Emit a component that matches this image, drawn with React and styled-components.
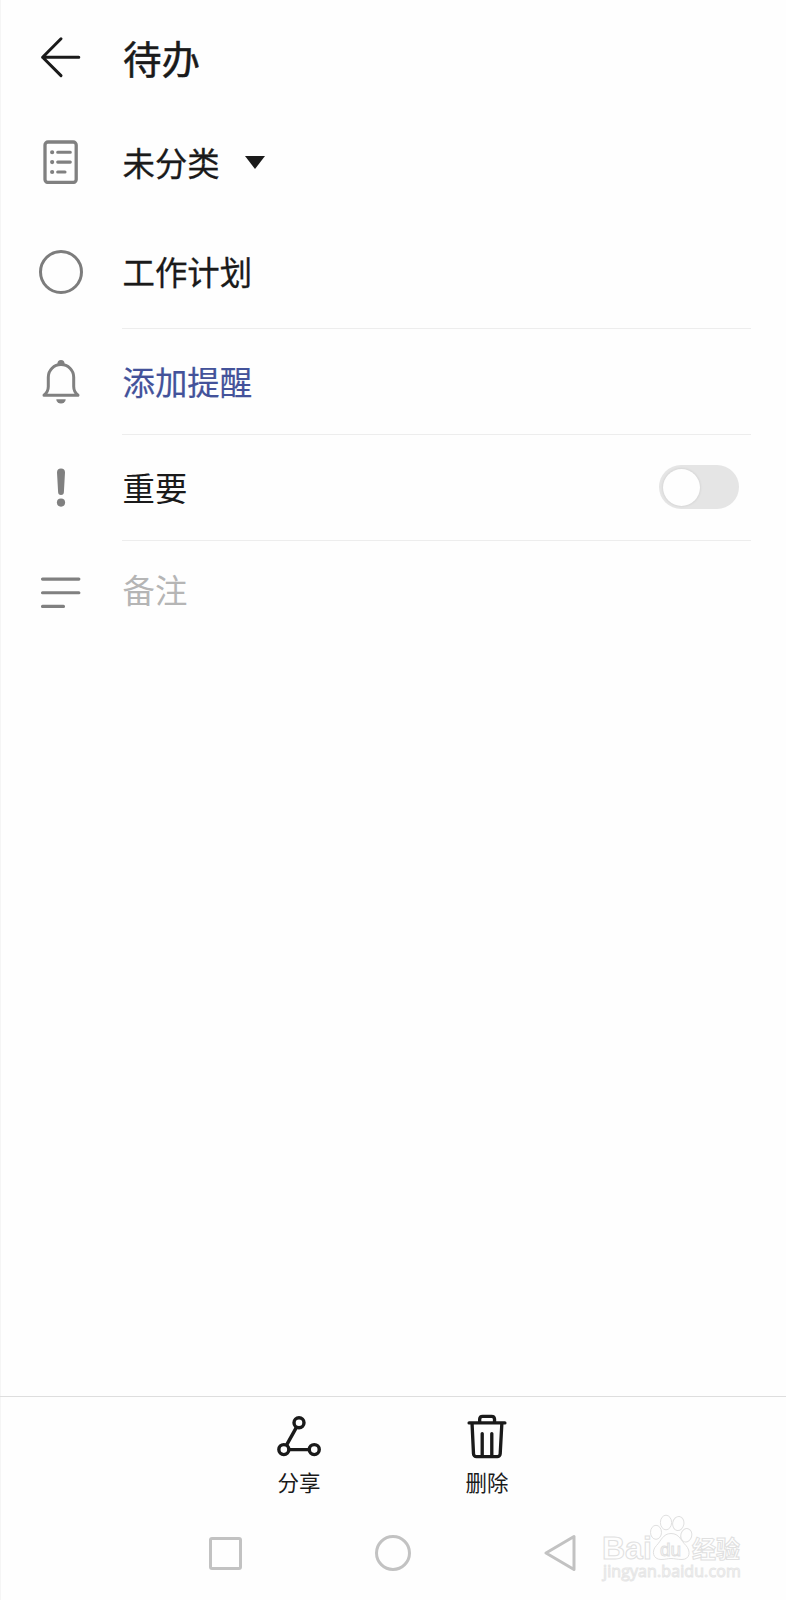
import React, { useState } from 'react'
import styled, { createGlobalStyle } from 'styled-components'

const ArrowIcon = () => (
	<svg width='44' height='44' viewBox='0 0 44 44' fill='none' stroke='#1a1a1a' strokeWidth='3' strokeLinecap='round' strokeLinejoin='round'>
		<path d='M22 3.8L3.6 22.2L22 40.6M3.6 22.2H39.8' />
	</svg>
)

const ListIcon = () => (
	<svg width='44' height='44' viewBox='0 0 44 44' fill='none' stroke='#808080' strokeLinecap='round'>
		<rect x='6' y='2' width='31.2' height='40.4' rx='3' strokeWidth='3.3' />
		<path d='M18.7 12.3H31.3M18.7 22.1H31.3M18.7 32H26' strokeWidth='3.1' />
		<path d='M13.1 12.3h.1M13.1 22.1h.1M13.1 32h.1' strokeWidth='4.1' />
	</svg>
)

const BellIcon = () => (
	<svg width='44' height='46' viewBox='0 0 44 46' fill='none' stroke='#808080' strokeLinejoin='round'>
		<path d='M5 36.2C8 33.8 9.3 31 9.3 27.5V18.2a12.7 12.7 0 0 1 25.4 0V27.5C34.7 31 36 33.8 39 36.2Z' strokeWidth='3' />
		<path d='M18.4 5a3.6 3.9 0 0 1 7.2 0Z' fill='#808080' stroke='none' />
		<path d='M17.3 40.2h9.4a4.7 4.4 0 0 1-9.4 0Z' fill='#808080' stroke='none' />
	</svg>
)

const ImportantIcon = () => (
	<svg width='44' height='40' viewBox='0 0 44 40' fill='#808080'>
		<path d='M18 4.5a4 4 0 0 1 8 0L24.9 24a2.9 2.9 0 0 1-5.8 0Z' />
		<circle cx='22' cy='34.6' r='4.1' />
	</svg>
)

const NoteIcon = () => (
	<svg width='44' height='36' viewBox='0 0 44 36' stroke='#808080' strokeWidth='3.1' strokeLinecap='round'>
		<path d='M3.5 4.1H39.9M3.5 17.8H39.9M3.5 31.4H24.5' />
	</svg>
)

const ShareIcon = () => (
	<svg width='46' height='46' viewBox='0 0 46 46' fill='none' stroke='#1a1a1a' strokeWidth='3.5'>
		<circle cx='23' cy='8.9' r='5.1' />
		<circle cx='7.5' cy='36.4' r='5.1' />
		<circle cx='38.6' cy='36.4' r='5.1' />
		<path d='M20.5 13.4L10.1 32M12.8 36.4H33.5' />
	</svg>
)

const TrashIcon = () => (
	<svg width='46' height='46' viewBox='0 0 46 46' fill='none' stroke='#1a1a1a' strokeWidth='3.4' strokeLinecap='round' strokeLinejoin='round'>
		<path d='M4.7 9.1H41.3M7.7 9.300L9.2 40.600a3 3 0 0 0 3 2.900H33.500a3 3 0 0 0 3-2.900L38.2 9.300' />
		<path d='M15.500 8.500V5.200a3 3 0 0 1 3-2.800H27.700a3 3 0 0 1 3 2.800V8.500' />
		<path d='M18.100 20V42.500M27.900 20V42.500' />
	</svg>
)

const BackIcon = () => (
	<svg width='34' height='40' viewBox='0 0 34 40' fill='none' stroke='#c2c2c2' strokeWidth='3' strokeLinejoin='round'>
		<path d='M30 3.5V36.500L2 20Z' />
	</svg>
)

const Watermark = () => (
	<WatermarkSvg width='146' height='76' viewBox='0 0 146 76' fill='#fefefe' stroke='#e0e0e0' strokeWidth='1'>
		<text x='2' y='49' fontSize='32' fontWeight='bold'>Bai</text>
		<ellipse cx='56' cy='22.3' rx='5.5' ry='7' />
		<ellipse cx='66' cy='12.5' rx='5.6' ry='7.3' />
		<ellipse cx='78.3' cy='13.5' rx='5.6' ry='7' transform='rotate(10 78.3 13.5)' />
		<ellipse cx='86.3' cy='25.3' rx='5.5' ry='6.8' transform='rotate(15 86.3 25.3)' />
		<path d='M71 23.5C63 23.5 61 31 56.5 35.5C51 41 53 49.5 61 49.5C66 49.5 67 48.5 71 48.5S77 49.5 82 49.5C90 49.5 91 41 86 35.5C81 31 79.5 23.5 71 23.5Z' />
		<text x='60' y='46' fontSize='19'>du</text>
		<text x='92' y='48' fontSize='24' fontWeight='bold'>经验</text>
		<WatermarkUrl x='3' y='67'>jingyan.baidu.com</WatermarkUrl>
	</WatermarkSvg>
)

const App = () => {
	const [important, setImportant] = useState(false)

	return (
		<Page>
			<GlobalStyle />
			<Row $height={114}>
				<IconCell><ArrowIcon /></IconCell>
				<Content><Title>待办</Title></Content>
			</Row>
			<Row $height={96}>
				<IconCell><ListIcon /></IconCell>
				<Content>
					<Label $stroke={0.3}>未分类</Label>
					<Caret />
				</Content>
			</Row>
			<Row $height={119} $top={4}>
				<IconCell><Circle $size={44} $border={3} $color='#7c7c7c' /></IconCell>
				<Content $divider><Label $stroke={0.3}>工作计划</Label></Content>
			</Row>
			<Row $height={106}>
				<IconCell><BellIcon /></IconCell>
				<Content $divider><Label $stroke={0.2} $color='#43529a'>添加提醒</Label></Content>
			</Row>
			<Row $height={106}>
				<IconCell><ImportantIcon /></IconCell>
				<Content $divider>
					<Label>重要</Label>
					<Switch
						type='button'
						role='switch'
						aria-checked={important}
						$on={important}
						onClick={() => setImportant(!important)}
					>
						<Knob />
					</Switch>
				</Content>
			</Row>
			<Row $height={103}>
				<IconCell><NoteIcon /></IconCell>
				<Content><Label $color='#b5b5b5' $lift={8}>备注</Label></Content>
			</Row>
			<Toolbar>
				<Action type='button'><ShareIcon />分享</Action>
				<Action type='button'><TrashIcon />删除</Action>
			</Toolbar>
			<NavBar>
				<Square />
				<Circle $size={36} $border={3} $color='#c2c2c2' />
				<BackIcon />
			</NavBar>
			<Watermark />
		</Page>
	)
}

export default App

const GlobalStyle = createGlobalStyle`
	* {
		box-sizing: border-box;
	}
	body {
		margin: 0;
		background: #fefefe;
	}
	svg {
		display: block;
	}
`

const Page = styled.div`
	position: relative;
	display: flex;
	flex-direction: column;
	width: 786px;
	height: 1600px;
	overflow: hidden;
	box-shadow: inset 1px 0 #f5f5f5;
	color: #1a1a1a;
	font-family: 'Noto Sans CJK SC', sans-serif;
`

const Row = styled.div`
	display: flex;
	height: ${props => props.$height}px;
	padding: ${props => props.$top || 0}px 35px 0 0;
`

const IconCell = styled.div`
	display: flex;
	align-items: center;
	justify-content: center;
	width: 122px;
`

const Content = styled.div`
	flex: 1;
	display: flex;
	align-items: center;
	border-bottom: ${props => props.$divider ? '1px solid #ededed' : 'none'};
`

const Title = styled.h1`
	margin: 0 0 0 1px;
	font-size: 38.5px;
	font-weight: 400;
	line-height: 56px;
	-webkit-text-stroke: .5px;
`

const Label = styled.span`
	margin-left: .5px;
	padding-bottom: ${props => props.$lift || 1}px;
	font-size: 32.4px;
	line-height: 48px;
	color: ${props => props.$color || 'inherit'};
	-webkit-text-stroke: ${props => props.$stroke || 0}px;
`

const Caret = styled.i`
	margin-left: 25px;
	border: solid transparent;
	border-width: 13px 10px 0;
	border-top-color: #1a1a1a;
`

const Circle = styled.div`
	width: ${props => props.$size}px;
	height: ${props => props.$size}px;
	border: ${props => props.$border}px solid ${props => props.$color};
	border-radius: 50%;
`

const Switch = styled.button`
	display: flex;
	align-items: center;
	justify-content: ${props => props.$on ? 'flex-end' : 'flex-start'};
	width: 80px;
	height: 44px;
	margin: 0 12px 1px auto;
	padding: 0 4px;
	border: 0;
	border-radius: 22px;
	background: ${props => props.$on ? '#43529a' : '#e5e5e5'};
`

const Knob = styled.span`
	width: 37px;
	height: 37px;
	border-radius: 50%;
	background: #fefefe;
	box-shadow: 0 0 3px rgba(0, 0, 0, .12);
`

const Toolbar = styled.div`
	display: flex;
	justify-content: center;
	gap: 88px;
	height: 112px;
	margin-top: auto;
	padding-top: 17px;
	border-top: 1px solid #dedede;
`

const Action = styled.button`
	display: flex;
	flex-direction: column;
	align-items: center;
	gap: 7px;
	width: 100px;
	height: 84px;
	padding: 0;
	border: 0;
	background: none;
	color: inherit;
	font-family: inherit;
	font-size: 21.5px;
	line-height: 32px;
`

const NavBar = styled.div`
	display: flex;
	align-items: center;
	justify-content: center;
	gap: 133px;
	height: 92px;
	padding-bottom: 2px;
`

const Square = styled.div`
	width: 33px;
	height: 33px;
	border: 3px solid #c2c2c2;
	border-radius: 3px;
`

const WatermarkSvg = styled.svg`
	position: absolute;
	right: 40px;
	bottom: 14px;
	font-family: 'Liberation Sans', 'Noto Sans CJK SC', sans-serif;
`

const WatermarkUrl = styled.text`
	font-family: 'Open Sans', sans-serif;
	font-size: 16px;
	letter-spacing: .1px;
	stroke: #e6e6e6;
`
